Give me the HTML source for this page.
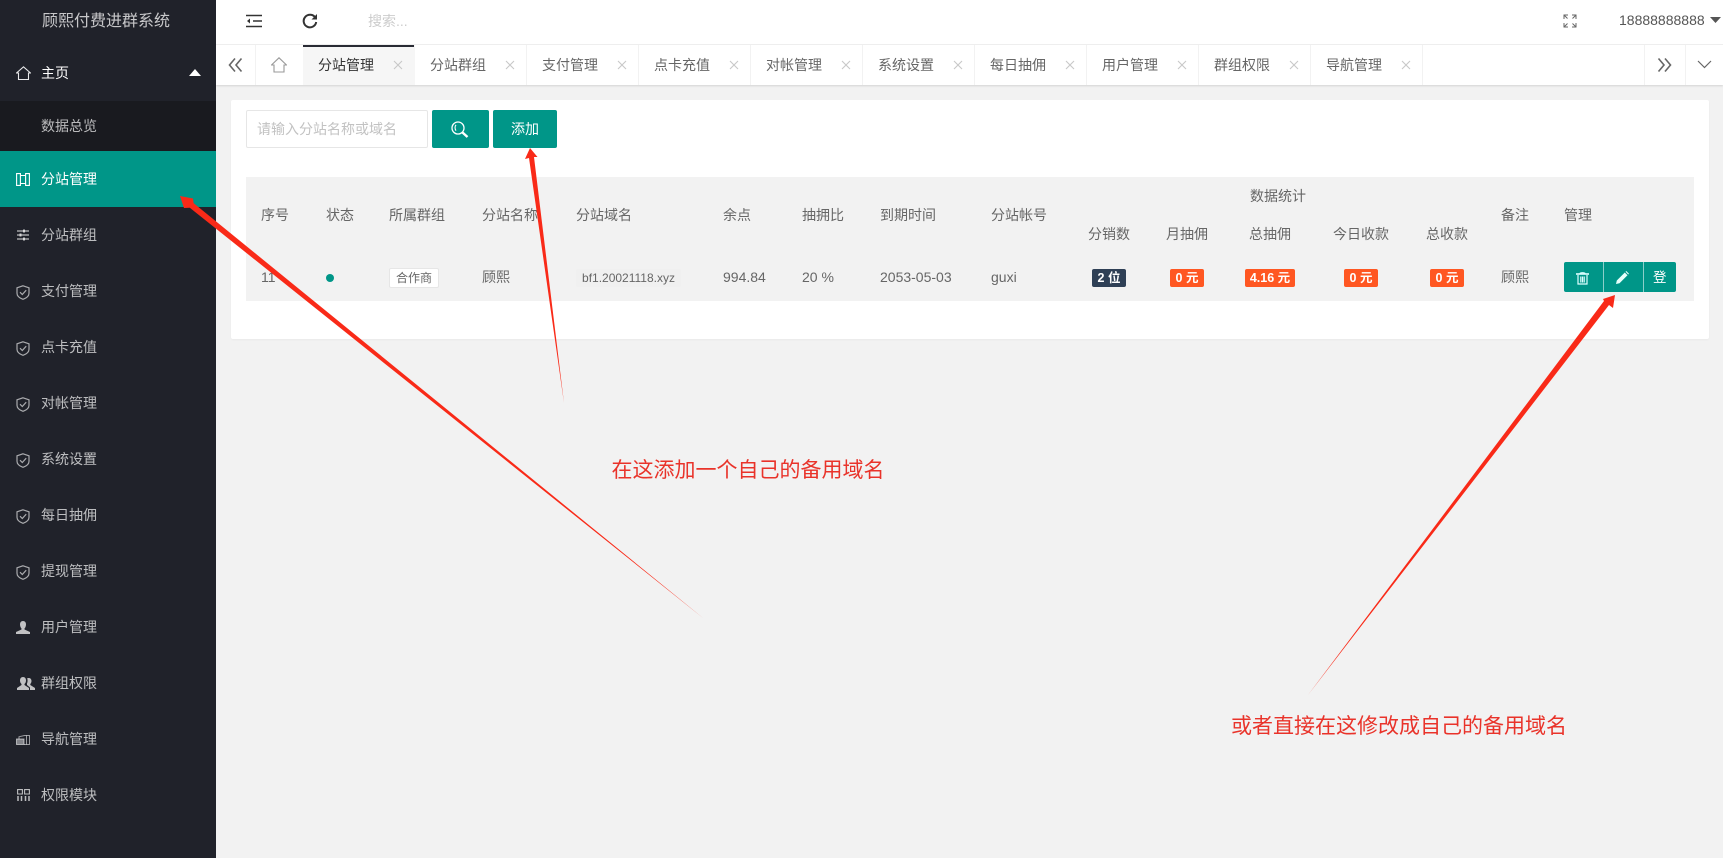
<!DOCTYPE html>
<html lang="zh"><head><meta charset="utf-8"><title>顾熙付费进群系统</title>
<style>
html,body{margin:0;padding:0;width:1723px;height:858px;overflow:hidden;background:#f2f2f2}
body{position:relative;font-family:"Liberation Sans","Noto Sans CJK SC",sans-serif;font-size:14px;color:#666}
div,span,svg{position:absolute}
.t{line-height:20px;height:20px;white-space:nowrap}
.side{left:0;top:0;width:216px;height:858px;background:#20222a}
.m{left:41px;color:rgba(255,255,255,.7)}
.i{left:16px;width:14px;height:15px;fill:none;stroke:rgba(255,255,255,.62);stroke-width:1.2}
.tab{top:45px;height:40px;width:112px;border-right:1px solid #f2f2f2;box-sizing:border-box}
.tab b{position:absolute;font-weight:normal;left:15px;top:10px;line-height:20px;color:#666}
.tab svg{left:90px;top:15px;width:10px;height:10px;stroke:#c8c8c8;stroke-width:1.1;fill:none}
.tag{color:#fff;border-radius:2px;height:18px;line-height:18px;font-size:12.5px;top:269px;text-align:center}
</style></head><body>
<svg width="0" height="0" style="left:0;top:0"><defs>
<symbol id="sh" viewBox="0 0 14 15"><path d="M7 .8 13 2.8V8.2C13 11.2 10 13.2 7 14.3 4 13.2 1 11.2 1 8.2V2.8Z"/><path d="M4 7.2 6.3 9.5 10.2 5.2"/></symbol>
<symbol id="x" viewBox="0 0 10 10"><path d="M1 1 9 9M9 1 1 9"/></symbol>
</defs></svg>

<!-- top header -->
<div style="left:216px;top:0;width:1507px;height:45px;background:#fff;border-bottom:1px solid #f0f0f0;box-sizing:border-box"></div>
<svg style="left:246px;top:14px" width="16" height="14" fill="none" stroke="#333" stroke-width="1.6"><path d="M0 1.5H16M7 7H16M0 12.5H16"/><path d="M4 4.5 1 7 4 9.5Z" fill="#333" stroke="none"/></svg>
<svg style="left:302px;top:13px" width="16" height="16" fill="none" stroke="#333" stroke-width="2"><path d="M13.5 5A6.3 6.3 0 1 0 14.2 9"/><path d="M15 1V6.5H9.5Z" fill="#333" stroke="none"/></svg>
<span class="t" style="left:368px;top:11px;color:#ccc">搜索...</span>
<svg style="left:1563px;top:14px" width="14" height="14" fill="none" stroke="#666" stroke-width="1"><path d="M1 5V1H5M1 1 4.5 4.5M13 5V1H9M13 1 9.5 4.5M1 9V13H5M1 13 4.5 9.5M13 9V13H9M13 13 9.5 9.5"/></svg>
<span class="t" style="left:1619px;top:10px;color:#555">18888888888</span>
<svg style="left:1710px;top:17px" width="11" height="7"><path d="M0 0H11L5.500 6Z" fill="#555"/></svg>

<!-- tab bar -->
<div style="left:216px;top:45px;width:1507px;height:40px;background:#fff;box-shadow:0 1px 2px rgba(0,0,0,.13)"></div>
<div style="left:216px;top:45px;width:39px;height:40px;border-right:1px solid #f2f2f2"></div>
<svg style="left:228px;top:57px" width="15" height="16" fill="none" stroke="#666" stroke-width="1.6"><path d="M7 1.500 1.500 8 7 14.500M13.500 1.500 8 8 13.500 14.500"/></svg>
<div style="left:255px;top:45px;width:48px;height:40px"></div>
<svg style="left:271px;top:57px" width="16" height="16" fill="none" stroke="#999" stroke-width="1.100"><path d="M.5 8 8 .8 15.500 8H13V15H3V8Z"/></svg>
<div style="left:303px;top:45px;width:112px;height:40px;background:#f6f6f6"></div>
<div style="left:303px;top:45px;width:111px;height:2px;background:#292b34"></div>

<div class="tab" style="left:303px;border:0"><b style="color:#333">分站管理</b><svg viewBox="0 0 10 10"><use href="#x"/></svg></div>
<div class="tab" style="left:415px"><b>分站群组</b><svg viewBox="0 0 10 10"><use href="#x"/></svg></div>
<div class="tab" style="left:527px"><b>支付管理</b><svg viewBox="0 0 10 10"><use href="#x"/></svg></div>
<div class="tab" style="left:639px"><b>点卡充值</b><svg viewBox="0 0 10 10"><use href="#x"/></svg></div>
<div class="tab" style="left:751px"><b>对帐管理</b><svg viewBox="0 0 10 10"><use href="#x"/></svg></div>
<div class="tab" style="left:863px"><b>系统设置</b><svg viewBox="0 0 10 10"><use href="#x"/></svg></div>
<div class="tab" style="left:975px"><b>每日抽佣</b><svg viewBox="0 0 10 10"><use href="#x"/></svg></div>
<div class="tab" style="left:1087px"><b>用户管理</b><svg viewBox="0 0 10 10"><use href="#x"/></svg></div>
<div class="tab" style="left:1199px"><b>群组权限</b><svg viewBox="0 0 10 10"><use href="#x"/></svg></div>
<div class="tab" style="left:1311px"><b>导航管理</b><svg viewBox="0 0 10 10"><use href="#x"/></svg></div>
<div style="left:1644px;top:45px;width:40px;height:40px;border-left:1px solid #f2f2f2;border-right:1px solid #f2f2f2"></div>
<svg style="left:1657px;top:57px" width="15" height="16" fill="none" stroke="#666" stroke-width="1.600"><path d="M1.500 1.500 7 8 1.500 14.500M8 1.500 13.500 8 8 14.500"/></svg>
<svg style="left:1697px;top:60px" width="15" height="9" fill="none" stroke="#666" stroke-width="1.200"><path d="M1 1 7.500 7.500 14 1"/></svg>

<!-- sidebar -->
<div class="side"></div>
<div style="left:0;top:101px;width:216px;height:50px;background:#191a1f"></div>
<div style="left:0;top:151px;width:216px;height:56px;background:#009688"></div>
<span class="t" style="left:42px;top:12px;font-size:16px;color:rgba(255,255,255,.75)">顾熙付费进群系统</span>
<svg style="left:16px;top:66px" width="15" height="14" fill="none" stroke="rgba(255,255,255,.9)" stroke-width="1.100"><path d="M.5 7 7.500 .8 14.500 7H12.500V13.500H2.500V7Z"/></svg>
<span class="t m" style="top:63px;color:#fff">主页</span>
<svg style="left:189px;top:69px" width="12" height="7"><path d="M6 0 12 7H0Z" fill="#fff"/></svg>
<span class="t m" style="top:116px">数据总览</span>
<svg style="left:16px;top:173px" width="14" height="13" fill="none" stroke="#fff" stroke-width="1.100"><path d="M.6.6H4.400V12.400H.6ZM9.600.6H13.400V12.400H9.600ZM4.400 2.500H9.600M4.400 10.500H9.600"/></svg>
<span class="t m" style="top:169px;color:#fff">分站管理</span>
<svg style="left:17px;top:229px" width="12" height="12" fill="none" stroke="rgba(255,255,255,.7)" stroke-width="1.200"><path d="M0 2H12M0 6H12M0 10H12"/><path d="M7 0.500V3.500M3.500 4.500V7.500M7 8.500V11.500" stroke-width="2"/></svg>
<span class="t m" style="top:225px">分站群组</span>
<svg class="i" style="top:285px"><use href="#sh"/></svg><span class="t m" style="top:281px">支付管理</span>
<svg class="i" style="top:341px"><use href="#sh"/></svg><span class="t m" style="top:337px">点卡充值</span>
<svg class="i" style="top:397px"><use href="#sh"/></svg><span class="t m" style="top:393px">对帐管理</span>
<svg class="i" style="top:453px"><use href="#sh"/></svg><span class="t m" style="top:449px">系统设置</span>
<svg class="i" style="top:509px"><use href="#sh"/></svg><span class="t m" style="top:505px">每日抽佣</span>
<svg class="i" style="top:565px"><use href="#sh"/></svg><span class="t m" style="top:561px">提现管理</span>
<svg style="left:16px;top:621px" width="14" height="13" fill="rgba(255,255,255,.72)"><path d="M7 0C9 0 10 1.500 10 3.500 10 5.500 9 7 8.500 7.500V8.500L14 11V13H0V11L5.500 8.500V7.500C5 7 4 5.500 4 3.500 4 1.500 5 0 7 0Z"/></svg>
<span class="t m" style="top:617px">用户管理</span>
<svg style="left:17px;top:677px" width="18" height="13" fill="rgba(255,255,255,.72)"><path d="M6 0C8 0 9 1.500 9 3.500 9 5.500 8 6.500 7.500 7V8L12 11V13H0V11L4.500 8V7C4 6.500 3 5.500 3 3.500 3 1.500 4 0 6 0Z"/><path d="M12 1C13.500 1 14.500 2.500 14.500 4 14.500 5.500 13.800 6.500 13.300 7V8L18 11V13H13V10.500L10 8V6.500C10.800 5 10.800 2 10 1.500 10.500 1.200 11 1 12 1Z"/></svg>
<span class="t m" style="top:673px">群组权限</span>
<svg style="left:16px;top:735px" width="14" height="10" fill="none" stroke="rgba(255,255,255,.55)"><path d="M.5 4H8V9.500H.5Z" fill="rgba(255,255,255,.45)"/><path d="M3 4V1.800L8.500.5H13.500V9.500H8"/><path d="M10.500.5V9.500"/></svg>
<span class="t m" style="top:729px">导航管理</span>
<svg style="left:17px;top:789px" width="13" height="12" fill="none" stroke="rgba(255,255,255,.7)" stroke-width="1.100"><path d="M.6.6H5.400V5H.6ZM7.600.6H12.400V5H7.600Z"/><path d="M1 7V12M4.500 7V12M8.500 7V12M12 7V12" stroke-width="1.500"/></svg>
<span class="t m" style="top:785px">权限模块</span>

<!-- card -->
<div style="left:231px;top:100px;width:1478px;height:239px;background:#fff;border-radius:2px;box-shadow:0 1px 2px rgba(0,0,0,.04)"></div>
<div style="left:246px;top:110px;width:182px;height:38px;border:1px solid #e6e6e6;border-radius:2px;box-sizing:border-box;background:#fff"></div>
<span class="t" style="left:257px;top:119px;color:#c2c2c2">请输入分站名称或域名</span>
<div style="left:432px;top:110px;width:57px;height:38px;background:#009688;border-radius:2px"></div>
<svg style="left:451px;top:121px" width="18" height="18" fill="none" stroke="#fff"><circle cx="7" cy="7" r="6" stroke-width="1.300"/><path d="M5 3.800C3.700 5.500 3.800 8 5 9.700" stroke-width="1.100"/><path d="M11.500 11.500 16.500 16" stroke-width="2.400"/></svg>
<div style="left:493px;top:110px;width:64px;height:38px;background:#009688;border-radius:2px;color:#fff;text-align:center;line-height:38px">添加</div>

<!-- table -->
<div style="left:246px;top:177px;width:1448px;height:124px;background:#f2f2f2"></div>
<span class="t" style="left:261px;top:205px">序号</span>
<span class="t" style="left:326px;top:205px">状态</span>
<span class="t" style="left:389px;top:205px">所属群组</span>
<span class="t" style="left:482px;top:205px">分站名称</span>
<span class="t" style="left:576px;top:205px">分站域名</span>
<span class="t" style="left:723px;top:205px">余点</span>
<span class="t" style="left:802px;top:205px">抽拥比</span>
<span class="t" style="left:880px;top:205px">到期时间</span>
<span class="t" style="left:991px;top:205px">分站帐号</span>
<span class="t" style="left:1250px;top:186px">数据统计</span>
<span class="t" style="left:1088px;top:224px">分销数</span>
<span class="t" style="left:1166px;top:224px">月抽佣</span>
<span class="t" style="left:1249px;top:224px">总抽佣</span>
<span class="t" style="left:1333px;top:224px">今日收款</span>
<span class="t" style="left:1426px;top:224px">总收款</span>
<span class="t" style="left:1501px;top:205px">备注</span>
<span class="t" style="left:1564px;top:205px">管理</span>

<span class="t" style="left:261px;top:267px">11</span>
<div style="left:326px;top:274px;width:8px;height:8px;border-radius:50%;background:#009688"></div>
<div style="left:389px;top:268px;width:50px;height:20px;background:#fff;border:1px solid #e6e6e6;box-sizing:border-box;border-radius:2px;font-size:12px;line-height:18px;text-align:center;color:#666">合作商</div>
<span class="t" style="left:482px;top:267px">顾熙</span>
<div style="left:576px;top:269px;width:105px;height:18px;background:#f0f0f0;border-radius:2px;font-size:12px;line-height:18px;text-align:center">bf1.20021118.xyz</div>
<span class="t" style="left:723px;top:267px">994.84</span>
<span class="t" style="left:802px;top:267px">20 %</span>
<span class="t" style="left:880px;top:267px">2053-05-03</span>
<span class="t" style="left:991px;top:267px">guxi</span>
<div class="tag" style="left:1092px;width:34px;background:#2f4056;font-weight:bold">2 位</div>
<div class="tag" style="left:1170px;width:34px;background:#ff5722;font-weight:bold">0 元</div>
<div class="tag" style="left:1245px;width:50px;background:#ff5722;font-weight:bold">4.16 元</div>
<div class="tag" style="left:1344px;width:34px;background:#ff5722;font-weight:bold">0 元</div>
<div class="tag" style="left:1430px;width:34px;background:#ff5722;font-weight:bold">0 元</div>
<span class="t" style="left:1501px;top:267px">顾熙</span>
<div style="left:1564px;top:262px;width:112px;height:30px;background:#009688;border-radius:2px"></div>
<div style="left:1603px;top:262px;width:1px;height:30px;background:rgba(255,255,255,.55)"></div>
<div style="left:1643px;top:262px;width:1px;height:30px;background:rgba(255,255,255,.55)"></div>
<svg style="left:1576px;top:272px" width="13" height="13" fill="none" stroke="#dff" stroke-width="1.200"><path d="M0 2H13" stroke-width="1.600"/><path d="M4 1.500C4 .5 9 .5 9 1.500M2 3V12H11V3"/><path d="M4.800 4.500V10.500M6.500 4.500V10.500M8.200 4.500V10.500"/></svg>
<svg style="left:1616px;top:271px" width="13" height="13"><path d="M0 13 .8 9.500 8.800 1.500 11.500 4.200 3.500 12.200Z M9.500.8 10.300 0 13 2.700 12.200 3.500Z" fill="#e8fffb"/></svg>
<span style="left:1653px;top:268px;color:#fff;line-height:20px;font-size:13.500px">登</span>

<!-- annotations -->
<svg style="left:0;top:0" width="1723" height="858">
<polygon fill="#f92a18" points="180,196 193,198.500 193.600,203.100 703,618 189.800,207.700 184,208"/>
<polygon fill="#f92a18" points="530,148 537.500,157 534,157 564,403 529,158 525,159"/>
<polygon fill="#f92a18" points="1615,295 1613,308 1609,305 1308,695 1604,301 1603,299"/>
</svg>
<span class="t" style="left:611.500px;top:461px;font-size:21px;color:#e9332a">在这添加一个自己的备用域名</span>
<span class="t" style="left:1231px;top:717px;font-size:21px;color:#e9332a">或者直接在这修改成自己的备用域名</span>
</body></html>
